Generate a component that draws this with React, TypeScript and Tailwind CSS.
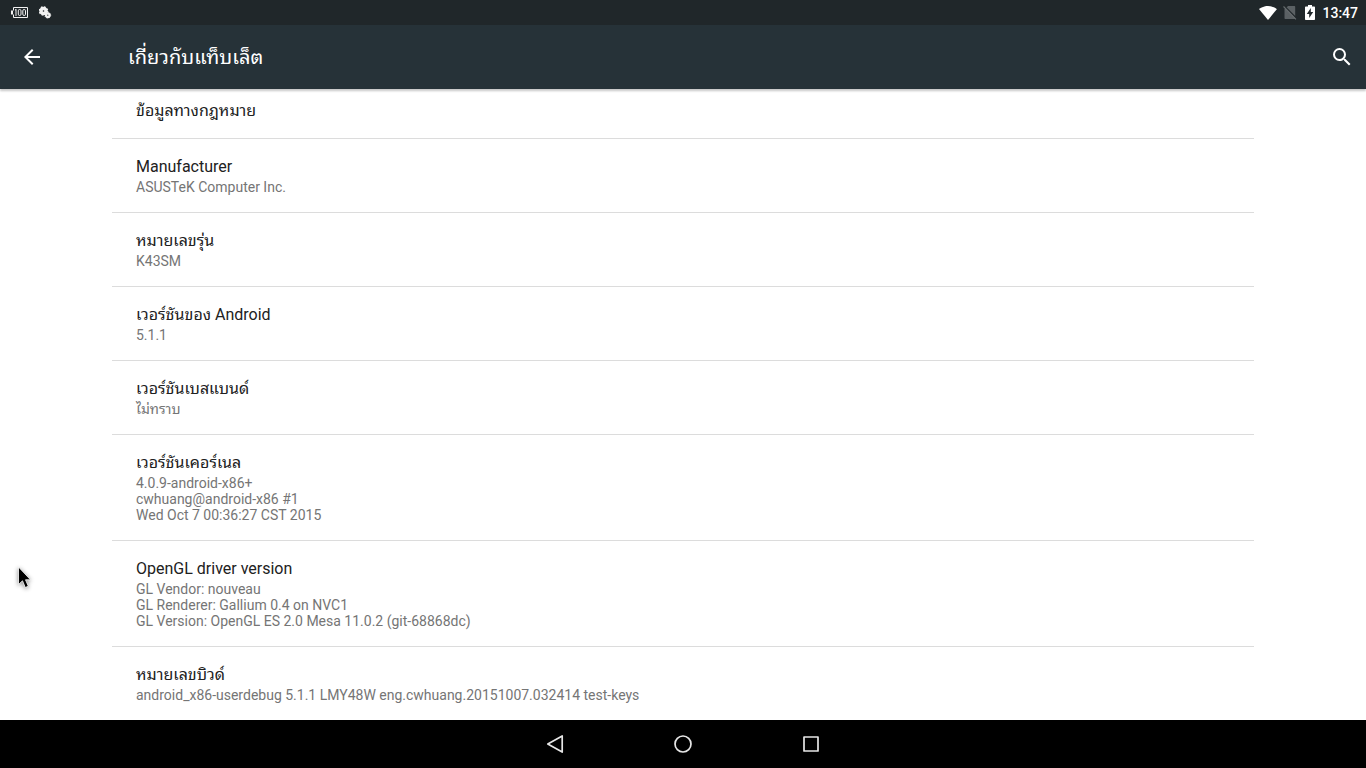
import React from "react";

type Item = { title: string; lines: string[] };

const items: Item[] = [
  { title: "Manufacturer", lines: ["ASUSTeK Computer Inc."] },
  { title: "หมายเลขรุ่น", lines: ["K43SM"] },
  { title: "เวอร์ชันของ Android", lines: ["5.1.1"] },
  { title: "เวอร์ชันเบสแบนด์", lines: ["ไม่ทราบ"] },
  {
    title: "เวอร์ชันเคอร์เนล",
    lines: ["4.0.9-android-x86+", "cwhuang@android-x86 #1", "Wed Oct 7 00:36:27 CST 2015"],
  },
  {
    title: "OpenGL driver version",
    lines: [
      "GL Vendor: nouveau",
      "GL Renderer: Gallium 0.4 on NVC1",
      "GL Version: OpenGL ES 2.0 Mesa 11.0.2 (git-68868dc)",
    ],
  },
  {
    title: "หมายเลขบิวด์",
    lines: ["android_x86-userdebug 5.1.1 LMY48W eng.cwhuang.20151007.032414 test-keys"],
  },
];

function StatusBar() {
  return (
    <div className="flex h-[25px] shrink-0 items-center justify-between bg-[#20272a] pr-2 pl-[11px] text-white">
      <div className="flex items-center gap-[10px]">
        <svg width="18" height="12" viewBox="0 0 18 12" fill="none" stroke="#f2f2f2" aria-hidden="true">
          <path d="M2.5 3.500V.5h14v10h-14v-3" />
          <path d="M0 3.500h2v4H0z" fill="#f2f2f2" stroke="none" />
          <path d="M5 2v7M4 3.200l1-.7" />
          <rect x="7.300" y="2.500" width="2.700" height="6" rx="1.300" />
          <rect x="11.800" y="2.500" width="2.700" height="6" rx="1.300" />
        </svg>
        <svg width="13" height="13" viewBox="0 0 13 13" aria-hidden="true">
          <circle cx="4.500" cy="5" r="2.500" fill="none" stroke="#f2f2f2" strokeWidth="3.400" />
          <circle cx="4.500" cy="5" r="4" fill="none" stroke="#f2f2f2" strokeWidth="1.600" strokeDasharray="1.700 1.440" />
          <circle cx="8.800" cy="9.200" r="1.700" fill="none" stroke="#f2f2f2" strokeWidth="2.200" />
          <circle cx="8.800" cy="9.200" r="2.900" fill="none" stroke="#f2f2f2" strokeDasharray="1.200 1.080" />
        </svg>
      </div>
      <div className="flex items-center">
        <svg width="18" height="14" viewBox="0 0 18 14" fill="#fff" aria-hidden="true">
          <path d="M9 14 0 3.100C.4 2.700 3.800 0 9 0s8.600 2.700 9 3.100z" />
        </svg>
        <svg className="ml-[6px]" width="14" height="15" viewBox="0 0 14 15" aria-hidden="true">
          <path d="M5 1h6.200c.6 0 1 .4 1 1v11c0 .6-.4 1-1 1H2.500c-.6 0-1-.4-1-1V4.500z" fill="#5b6164" />
          <path d="M1.500 1.200 14 13.700" stroke="#20272a" strokeWidth="1.500" />
          <path d="M.5 1.500 13 14.300" stroke="#666c6e" strokeWidth="1.100" />
        </svg>
        <svg className="mr-[7px] mb-px ml-2" width="10" height="15" viewBox="0 0 10 15" aria-hidden="true">
          <path d="M9 1.500H7V0H3v1.500H1c-.6 0-1 .4-1 1V14c0 .6.4 1 1 1h8c.6 0 1-.4 1-1V2.500c0-.6-.4-1-1-1z" fill="#fff" />
          <path d="M4.200 13V9H1.800l4-6v4h2.400z" fill="#20272a" />
        </svg>
        <time className="text-sm leading-5 font-medium">13:47</time>
      </div>
    </div>
  );
}

function Toolbar() {
  return (
    <header className="relative z-10 flex h-16 shrink-0 items-center bg-[#263238] pr-3 pl-5 text-white shadow-[0_2px_2px_rgba(0,0,0,0.22)]">
      <button type="button" aria-label="ย้อนกลับ">
        <svg width="24" height="24" viewBox="0 0 24 24" fill="currentColor">
          <path d="M20 11H7.830l5.590-5.590L12 4l-8 8 8 8 1.410-1.410L7.830 13H20v-2z" />
        </svg>
      </button>
      <h1 className="ml-[84px] flex-1 text-xl">เกี่ยวกับแท็บเล็ต</h1>
      <button type="button" aria-label="ค้นหา">
        <svg width="24" height="24" viewBox="0 0 24 24" fill="currentColor">
          <path d="M15.500 14h-.79l-.28-.27A6.471 6.471 0 0 0 16 9.500 6.500 6.500 0 1 0 9.500 16c1.610 0 3.090-.59 4.230-1.570l.27.28v.79l5 4.990L20.490 19l-4.990-5zm-6 0C7.010 14 5 11.990 5 9.500S7.010 5 9.500 5 14 7.010 14 9.500 11.990 14 9.500 14z" />
        </svg>
      </button>
    </header>
  );
}

function NavBar() {
  return (
    <nav className="flex h-12 shrink-0 items-center justify-center gap-[104px] bg-black text-[#e6e6e6]">
      <button type="button" aria-label="กลับ">
        <svg width="24" height="24" viewBox="0 0 24 24" fill="none" stroke="currentColor" strokeWidth="1.700" strokeLinejoin="round">
          <path d="M19.200 3.900v16.200L4.800 12z" />
        </svg>
      </button>
      <button type="button" aria-label="หน้าแรก">
        <svg width="24" height="24" viewBox="0 0 24 24" fill="none" stroke="currentColor" strokeWidth="1.700">
          <circle cx="12" cy="12" r="8" />
        </svg>
      </button>
      <button type="button" aria-label="ล่าสุด">
        <svg width="24" height="24" viewBox="0 0 24 24" fill="none" stroke="currentColor" strokeWidth="1.700" strokeLinejoin="round">
          <path d="M5 5h14v14H5z" />
        </svg>
      </button>
    </nav>
  );
}

export default function App() {
  return (
    <div className="relative flex h-screen flex-col bg-white font-[Roboto,'Noto_Sans_Thai_Looped',Loma,sans-serif]">
      <StatusBar />
      <Toolbar />
      <main className="min-h-0 flex-1 overflow-hidden px-28">
        <ul>
          <li className="border-b border-[#dcdcdc] px-6 pt-[10px] pb-[15px]">
            <h2 className="h-6 text-base text-[#212121]">ข้อมูลทางกฎหมาย</h2>
          </li>
          {items.map((item) => (
            <li key={item.title} className="border-b border-[#dcdcdc] px-6 pt-4 pb-[17px] last:border-b-0">
              <h2 className="h-6 text-base text-[#212121]">{item.title}</h2>
              {item.lines.map((line) => (
                <p key={line} className="h-4 text-sm leading-4 text-[#757575]">
                  {line}
                </p>
              ))}
            </li>
          ))}
        </ul>
      </main>
      <NavBar />
      <svg className="pointer-events-none absolute top-[564px] left-[14px] z-20 drop-shadow-[0_1px_2px_rgba(0,0,0,0.45)]" width="20" height="28" viewBox="0 0 20 28" aria-hidden="true">
        <path d="M4.500 3v17.500l4-3.700 2.800 6.700 3-1.300-2.800-6.400h5z" fill="#000" stroke="#fff" strokeWidth=".8" />
      </svg>
    </div>
  );
}
